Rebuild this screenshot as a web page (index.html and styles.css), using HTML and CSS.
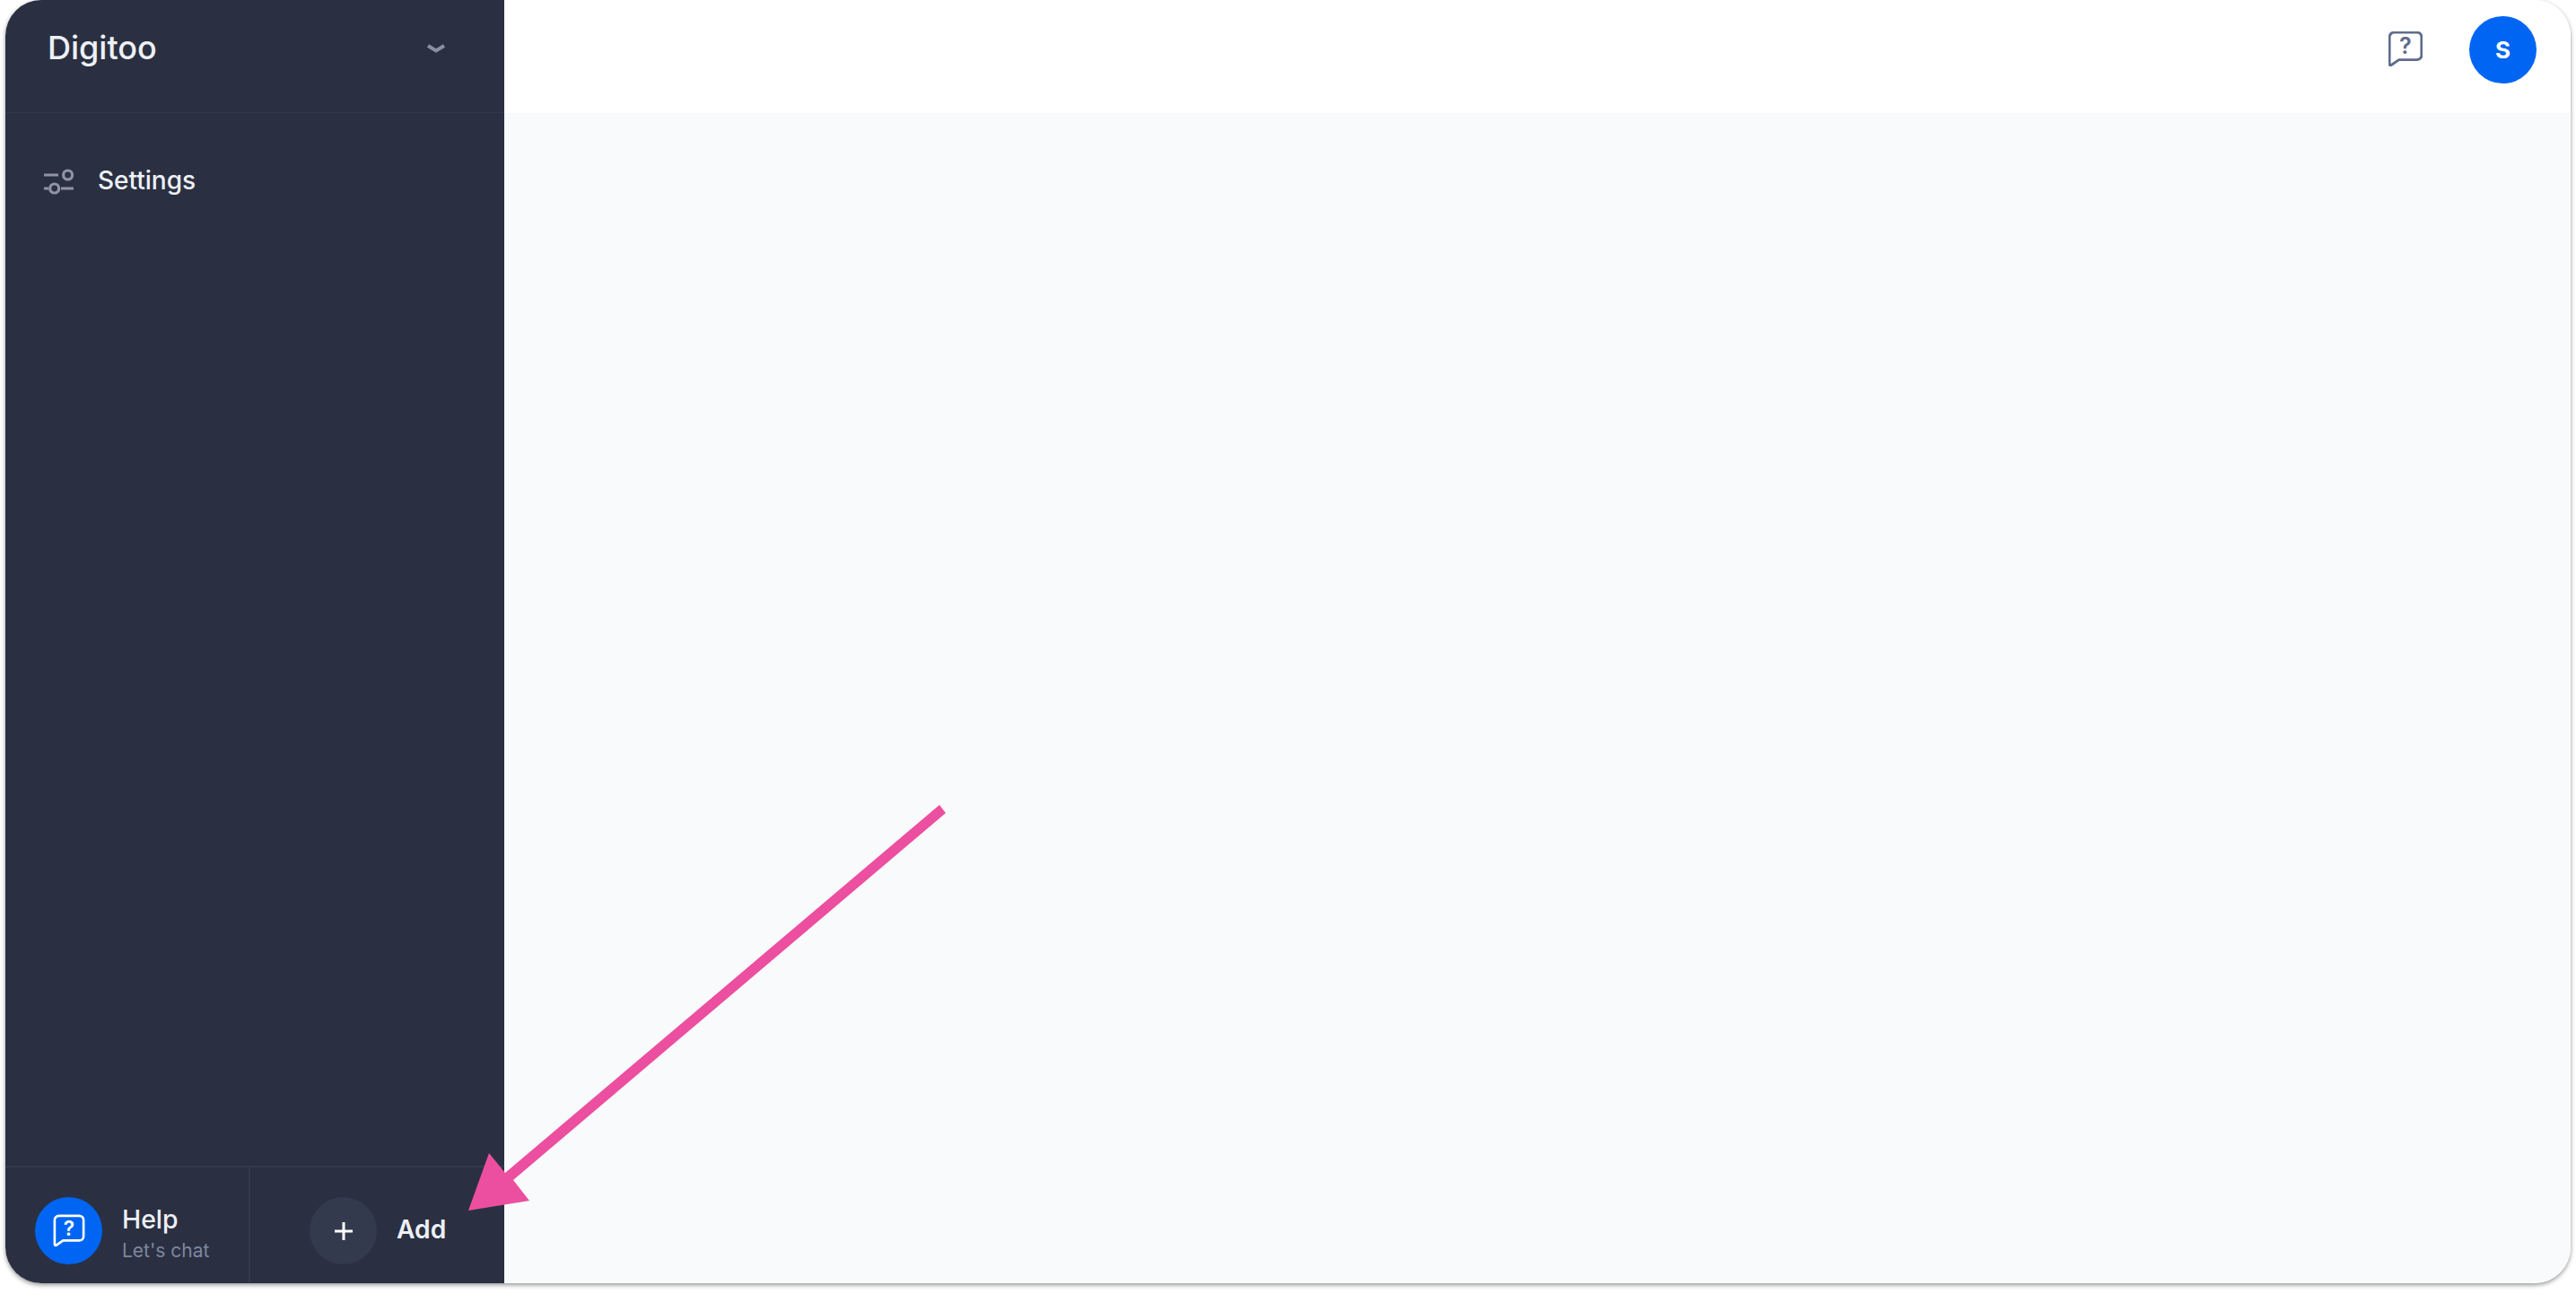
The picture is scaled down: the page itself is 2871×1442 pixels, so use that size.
FILE: index.html
```html
<!DOCTYPE html>
<html lang="en">
<head>
<meta charset="utf-8">
<title>Digitoo</title>
<link rel="stylesheet" href="styles.css">
</head>
<body>
<div class="window">
  <aside class="sidebar">
    <div class="brand">
      <span class="brand-name">Digitoo</span>
      <svg class="chevron" viewBox="0 0 22 10"><path d="M2 2 L11 7.5 L20 2"/></svg>
    </div>
    <nav class="nav">
      <div class="nav-item">
        <svg class="nav-icon" viewBox="0 0 34 24">
          <path d="M0 6H16M0 21H5M19 21H33"/>
          <circle cx="26.6" cy="6" r="5"/>
          <circle cx="11.7" cy="21" r="5"/>
        </svg>
        <span>Settings</span>
      </div>
    </nav>
    <div class="side-footer">
      <div class="help">
        <span class="circle circle-blue">
          <svg class="bubble bubble-light" viewBox="0 0 38 39">
            <path d="M7 2H31A5 5 0 0 1 36 7V26A5 5 0 0 1 31 31H12L4 36.5Q2 37.5 2 35V7A5 5 0 0 1 7 2Z"/>
            <text x="19" y="25" text-anchor="middle">?</text>
          </svg>
        </span>
        <div class="help-text">
          <span class="help-title">Help</span>
          <span class="help-sub">Let's chat</span>
        </div>
      </div>
      <div class="add">
        <span class="circle circle-dark">
          <svg class="plus" viewBox="0 0 20 20"><path d="M10 0V20M0 10H20"/></svg>
        </span>
        <span class="add-label">Add</span>
      </div>
    </div>
  </aside>
  <main class="content">
    <header class="topbar">
      <svg class="bubble bubble-muted" viewBox="1 1 36 37">
        <path d="M7 2H31A5 5 0 0 1 36 7V26A5 5 0 0 1 31 31H12L4 36.5Q2 37.5 2 35V7A5 5 0 0 1 7 2Z"/>
        <text x="19" y="25" text-anchor="middle">?</text>
      </svg>
      <span class="avatar">S</span>
    </header>
    <div class="canvas"></div>
  </main>
</div>
<svg class="arrow" viewBox="0 0 2871 1442">
  <polygon points="1047,897 1054,906 572,1315 590,1338 522,1349 545,1285 563,1307"/>
</svg>
</body>
</html>
```

FILE: styles.css
```css
* { box-sizing: border-box; }

html, body {
  margin: 0;
  height: 100%;
  background: #ffffff;
  overflow: hidden;
}

body {
  position: relative;
  padding: 0 6px 0 6px;
  font-family: Inter, "Noto Sans", sans-serif;
}

.window {
  display: flex;
  height: 1430px;
  border-radius: 40px;
  overflow: hidden;
  box-shadow: 0 2px 5px rgba(0, 0, 0, 0.42);
}

.sidebar {
  display: flex;
  flex-direction: column;
  flex: 0 0 556px;
  background: #2a3042;
  color: #eef0f5;
}

.brand {
  display: flex;
  align-items: center;
  justify-content: space-between;
  flex: 0 0 126px;
  padding: 0 65px 0 47px;
  border-bottom: 1px solid #323849;
}

.brand-name {
  font-size: 36px;
  font-weight: 500;
  line-height: 1;
  margin-top: -20px;
}

.chevron {
  width: 22px;
  height: 10px;
  margin-top: -18px;
  fill: none;
  stroke: #8b8f9e;
  stroke-width: 4;
}

.nav {
  flex: 1;
  padding-top: 54px;
}

.nav-item {
  display: flex;
  align-items: center;
  gap: 26px;
  height: 42px;
  padding-left: 43px;
  font-size: 28px;
  font-weight: 500;
}

.nav-icon {
  width: 34px;
  height: 24px;
  fill: none;
  stroke: #8f93a3;
  stroke-width: 3.2;
  overflow: visible;
}

.side-footer {
  display: flex;
  flex: 0 0 131px;
  border-top: 2px solid #343a4c;
}

.help {
  display: flex;
  align-items: center;
  flex: 0 0 273px;
  gap: 22px;
  padding: 12px 0 0 33px;
  border-right: 2px solid #343a4c;
}

.circle {
  display: flex;
  align-items: center;
  justify-content: center;
  width: 75px;
  height: 75px;
  flex: none;
  border-radius: 50%;
}

.circle-blue { background: #0065f2; }
.circle-dark { background: #343a4d; }

.help-text {
  display: flex;
  flex-direction: column;
  gap: 5px;
  margin-top: 5px;
}

.help-title {
  font-size: 28.4px;
  font-weight: 500;
  line-height: 34px;
}

.help-sub {
  font-size: 21px;
  line-height: 26px;
  color: #7f869d;
}

.add {
  display: flex;
  align-items: center;
  gap: 22px;
  padding: 12px 0 0 66px;
}

.add-label {
  font-size: 28.2px;
  font-weight: 600;
  margin-top: -3px;
}

.plus {
  width: 20px;
  height: 20px;
  fill: none;
  stroke: #ffffff;
  stroke-width: 3;
}

.bubble {
  fill: none;
  stroke-width: 2.8;
}

.bubble text {
  font-family: Inter, sans-serif;
  font-size: 24px;
  font-weight: 600;
  stroke: none;
}

.bubble-light {
  width: 36px;
  height: 37px;
  stroke: #ffffff;
}

.bubble-light text { fill: #ffffff; }

.bubble-muted {
  width: 38px;
  height: 39px;
  stroke: #5f6c8c;
}

.bubble-muted text { fill: #5f6c8c; }

.content {
  display: flex;
  flex-direction: column;
  flex: 1;
  background: #f8fafc;
}

.topbar {
  display: flex;
  align-items: flex-start;
  justify-content: flex-end;
  flex: 0 0 126px;
  gap: 52px;
  padding: 18px 38px 0 0;
  background: #ffffff;
}

.topbar .bubble {
  margin-top: 17px;
}

.avatar {
  display: flex;
  align-items: center;
  justify-content: center;
  width: 75px;
  height: 75px;
  border-radius: 50%;
  background: #0065f2;
  color: #ffffff;
  font-size: 26px;
  font-weight: 700;
}

.canvas { flex: 1; }

.arrow {
  position: absolute;
  top: 0;
  left: 0;
  width: 2871px;
  height: 1442px;
  fill: #ec4f9f;
  pointer-events: none;
}
```
